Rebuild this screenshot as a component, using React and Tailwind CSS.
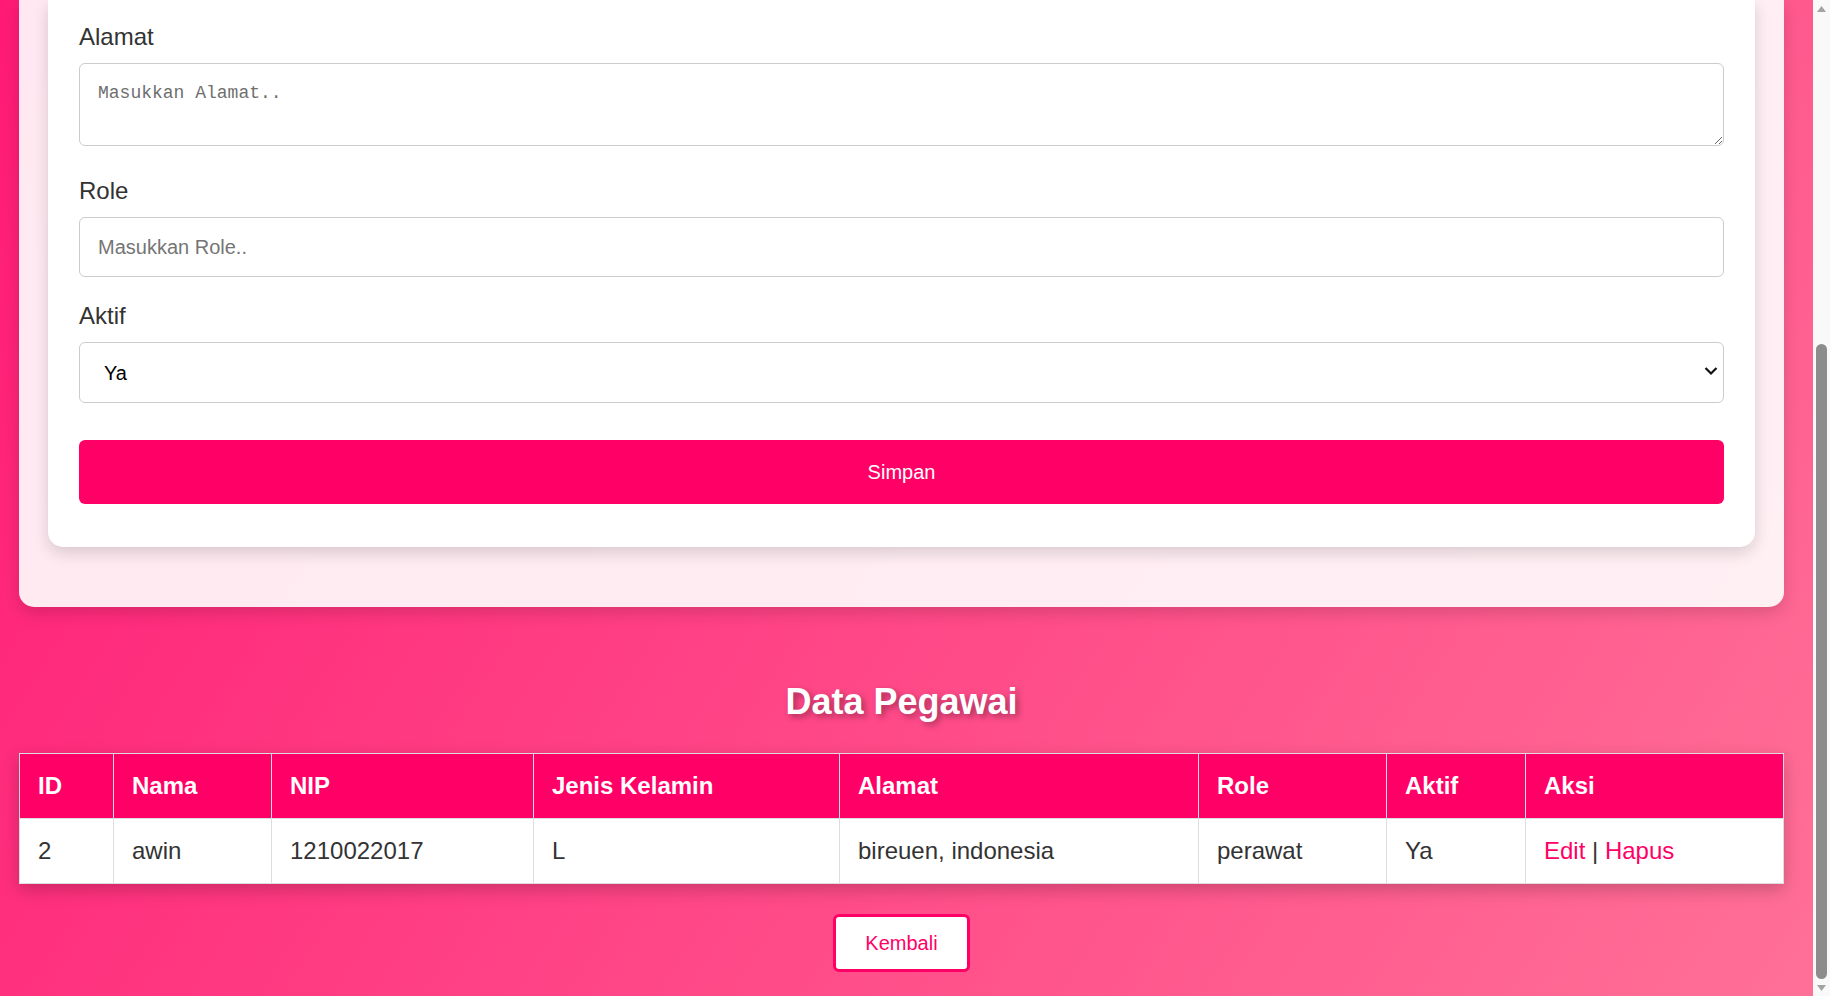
import { useState } from 'react';

const pegawai = [
  { id: 2, nama: 'awin', nip: '1210022017', jk: 'L', alamat: 'bireuen, indonesia', role: 'perawat', aktif: 'Ya' },
];

const kolom = [
  { label: 'ID', w: 'w-[94px]' },
  { label: 'Nama', w: 'w-[158px]' },
  { label: 'NIP', w: 'w-[262px]' },
  { label: 'Jenis Kelamin', w: 'w-[306px]' },
  { label: 'Alamat', w: 'w-[359px]' },
  { label: 'Role', w: 'w-[188px]' },
  { label: 'Aktif', w: 'w-[139px]' },
  { label: 'Aksi', w: 'w-[258px]' },
];

function Label({ children }) {
  return <label className="block text-[24px] leading-[28px] text-[#333] mb-[12px]">{children}</label>;
}

function FakeScrollbar() {
  return (
    <div className="w-[17px] h-full flex flex-col bg-[#f9f9f9]">
      <div className="h-[17px] flex items-center justify-center">
        <svg width="9" height="6" viewBox="0 0 9 6"><path d="M4.5 0 L9 6 L0 6 Z" fill="#a3a3a3" /></svg>
      </div>
      <div className="h-[327px]" />
      <div className="flex-1 mx-[3px] rounded-full bg-[#8c8c8c]" />
      <div className="h-[17px] flex items-center justify-center">
        <svg width="9" height="6" viewBox="0 0 9 6"><path d="M0 0 L9 0 L4.5 6 Z" fill="#a3a3a3" /></svg>
      </div>
    </div>
  );
}

export default function App() {
  const [form, setForm] = useState({ alamat: '', role: '', aktif: 'Ya' });

  return (
    <div className="flex h-[996px] overflow-hidden font-['Liberation_Sans',Arial,sans-serif]">
      <div className="flex-1 flex flex-col bg-[linear-gradient(123deg,#ff1a75,#ff7097)] pl-[19px] pr-[29px]">
        {/* panel form (bagian atas sudah terscroll) */}
        <div className="bg-white/90 rounded-b-[15px] px-[29px] pb-[60px] shadow-[0_6px_16px_rgba(0,0,0,0.15)]">
          <div className="bg-white rounded-b-[15px] px-[31px] pt-[23px] pb-[43px] shadow-[0_6px_16px_rgba(0,0,0,0.15)]">
            <Label>Alamat</Label>
            <textarea
              value={form.alamat}
              onChange={e => setForm({ ...form, alamat: e.target.value })}
              placeholder="Masukkan Alamat.."
              className="block w-full h-[83px] mb-[31px] border border-[#ccc] rounded-[6px] px-[18px] pt-[19px] text-[18px] leading-[20px] font-['Liberation_Mono',monospace] placeholder:text-[#6f6f6f] outline-none"
            />

            <Label>Role</Label>
            <input
              value={form.role}
              onChange={e => setForm({ ...form, role: e.target.value })}
              placeholder="Masukkan Role.."
              className="block w-full h-[60px] mb-[25px] border border-[#ccc] rounded-[6px] px-[18px] text-[20px] text-[#333] placeholder:text-[#757575] outline-none"
            />

            <Label>Aktif</Label>
            <div className="relative">
              <select
                value={form.aktif}
                onChange={e => setForm({ ...form, aktif: e.target.value })}
                className="block w-full h-[61px] appearance-none border border-[#ccc] rounded-[6px] pl-[24px] text-[20px] text-black bg-white outline-none"
              >
                <option>Ya</option>
                <option>Tidak</option>
              </select>
              <svg className="absolute right-[6px] top-[24px] pointer-events-none" width="14" height="10" viewBox="0 0 14 10">
                <path d="M1.5 2 L7 7.5 L12.5 2" fill="none" stroke="#111" strokeWidth="2.2" />
              </svg>
            </div>

            <button className="mt-[37px] w-full h-[64px] rounded-[6px] bg-[#ff0066] text-white text-[20px]">
              Simpan
            </button>
          </div>
        </div>

        <h2 className="mt-[74px] text-center text-white text-[36px] leading-[42px] font-bold [text-shadow:3px_3px_6px_rgba(0,0,0,0.35)]">
          Data Pegawai
        </h2>

        <table className="mt-[30px] w-full table-fixed border-collapse border border-[#ddd] bg-white shadow-[0_6px_16px_rgba(0,0,0,0.2)]">
          <colgroup>
            {kolom.map(k => <col key={k.label} className={k.w} />)}
          </colgroup>
          <thead>
            <tr className="bg-[#ff0066]">
              {kolom.map(k => (
                <th key={k.label} className="h-[65px] px-[18px] text-left text-white text-[24px] font-bold border border-[#ddd]">
                  {k.label}
                </th>
              ))}
            </tr>
          </thead>
          <tbody>
            {pegawai.map(p => (
              <tr key={p.id} className="text-[24px] text-[#333]">
                <td className="h-[65px] px-[18px] border border-[#ddd]">{p.id}</td>
                <td className="px-[18px] border border-[#ddd]">{p.nama}</td>
                <td className="px-[18px] border border-[#ddd]">{p.nip}</td>
                <td className="px-[18px] border border-[#ddd]">{p.jk}</td>
                <td className="px-[18px] border border-[#ddd]">{p.alamat}</td>
                <td className="px-[18px] border border-[#ddd]">{p.role}</td>
                <td className="px-[18px] border border-[#ddd]">{p.aktif}</td>
                <td className="px-[18px] border border-[#ddd]">
                  <a href="#" className="text-[#ff0066]">Edit</a> | <a href="#" className="text-[#ff0066]">Hapus</a>
                </td>
              </tr>
            ))}
          </tbody>
        </table>

        <div className="mt-[30px] flex justify-center">
          <button className="w-[137px] h-[58px] rounded-[6px] border-[3px] border-[#ff0066] bg-white text-[#ff0066] text-[20px]">
            Kembali
          </button>
        </div>
      </div>
      <FakeScrollbar />
    </div>
  );
}
